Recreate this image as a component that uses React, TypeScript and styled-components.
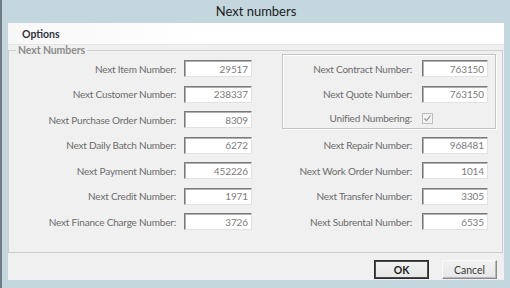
import React from "react";
import styled, { createGlobalStyle } from "styled-components";

const Global = createGlobalStyle`
  html, body { margin: 0; padding: 0; background: #ffffff; }
  body { font-family: Lato, "Noto Sans", sans-serif; }
`;

const Frame = styled.div`
  width: 510px;
  height: 288px;
  box-sizing: border-box;
  display: flex;
  flex-direction: column;
  background: #c4d7de;
  border-left: 2px solid #6f7b80;
  padding: 0 6px 8px 6px;
`;

const TitleBar = styled.div`
  height: 23px;
  flex: none;
  display: flex;
  align-items: center;
  justify-content: center;
  font-family: Lato, "Noto Sans", sans-serif;
  font-size: 13px;
  color: #1c1c1c;
  padding-bottom: 1px;
  box-sizing: border-box;
`;

const Client = styled.div`
  flex: 1;
  display: flex;
  flex-direction: column;
  background: #f0f0f0;
  min-height: 0;
`;

const MenuBar = styled.div`
  height: 22px;
  flex: none;
  display: flex;
  align-items: center;
  padding-left: 14px;
  background: linear-gradient(to right, #f7f7f7, #ffffff 40%, #ffffff);
  border-bottom: 1px solid #e6e6e6;
  box-sizing: border-box;
`;

const MenuItem = styled.span`
  font-size: 10.5px;
  font-weight: 700;
  color: #2e3440;
`;

const Group = styled.fieldset`
  flex: 1;
  margin: 0 1px 0 0;
  padding: 0;
  border: 1px solid #cdcdcd;
  border-top-color: #d0d0d0;
  min-width: 0;
  display: flex;
  flex-direction: row;
  gap: 30px;
`;

const Legend = styled.legend`
  margin-left: 7px;
  padding: 0 2px;
  font-size: 10.5px;
  line-height: 10px;
  font-weight: 700;
  color: #8d8d8d;
  letter-spacing: -0.1px;
`;

const Column = styled.div<{ $width: number }>`
  width: ${(p) => p.$width}px;
  flex: none;
  display: flex;
  flex-direction: column;
`;

const Stack = styled.div<{ $top?: number; $right?: number }>`
  display: flex;
  flex-direction: column;
  gap: 8.5px;
  padding-top: ${(p) => p.$top ?? 0}px;
  padding-right: ${(p) => p.$right ?? 0}px;
`;

const InnerBox = styled.div`
  margin-top: -1px;
  border: 1px solid #c4c4c4;
  box-shadow: inset 1px 1px 0 #ffffff, 1px 1px 0 #ffffff;
  padding: 5px 7px 3px 0;
  display: flex;
  flex-direction: column;
  gap: 8.5px;
  margin-bottom: 7.5px;
`;

const Row = styled.div<{ $gap: number; $h?: number }>`
  height: ${(p) => p.$h ?? 17}px;
  display: flex;
  align-items: center;
  justify-content: flex-end;
  gap: ${(p) => p.$gap}px;
`;

const Label = styled.span`
  font-size: 10px;
  letter-spacing: -0.2px;
  color: #6b6b6b;
  white-space: nowrap;
`;

const Field = styled.input<{ $w: number }>`
  width: ${(p) => p.$w}px;
  height: 17px;
  box-sizing: border-box;
  margin: 0;
  padding: 0 3px 0 2px;
  border: 1px solid;
  border-color: #7a7a7a #e2e2e2 #e2e2e2 #7a7a7a;
  box-shadow: inset 1px 1px 0 #b0b0b0;
  background: #ffffff;
  font-family: Lato, "Noto Sans", sans-serif;
  font-size: 10px;
  letter-spacing: -0.1px;
  color: #7c7c7c;
  text-align: right;
  outline: none;
`;

const Check = styled.span`
  width: 11px;
  height: 11px;
  box-sizing: border-box;
  border: 1px solid #bdbdbd;
  background: #f3f3f3;
  display: flex;
  align-items: center;
  justify-content: center;
  margin-right: 55px;
`;

const ButtonBar = styled.div`
  height: 27px;
  flex: none;
  display: flex;
  justify-content: flex-end;
  gap: 13px;
  padding: 7px 7px 0 0;
  box-sizing: border-box;
`;

const Button = styled.button<{ $default?: boolean }>`
  width: 55px;
  height: 19px;
  box-sizing: border-box;
  margin: 0;
  padding: 0;
  font-family: Lato, "Noto Sans", sans-serif;
  font-size: 10.5px;
  font-weight: ${(p) => (p.$default ? 700 : 400)};
  color: ${(p) => (p.$default ? "#1a1a1a" : "#3a3a3a")};
  background: linear-gradient(#f2f2f2, #e6e6e6);
  border: 1px solid;
  border-color: ${(p) =>
    p.$default ? "#2c2c2c" : "#f8f8f8 #8a8a8a #8a8a8a #f8f8f8"};
  box-shadow: ${(p) =>
    p.$default
      ? "inset 1px 1px 0 #4a4a4a, inset -1px -1px 0 #4a4a4a"
      : "inset -1px -1px 0 #b8b8b8"};
`;

type Entry = { label: string; value: string };

const left: Entry[] = [
  { label: "Next Item Number:", value: "29517" },
  { label: "Next Customer Number:", value: "238337" },
  { label: "Next Purchase Order Number:", value: "8309" },
  { label: "Next Daily Batch Number:", value: "6272" },
  { label: "Next Payment Number:", value: "452226" },
  { label: "Next Credit Number:", value: "1971" },
  { label: "Next Finance Charge Number:", value: "3726" },
];

const boxed: Entry[] = [
  { label: "Next Contract Number:", value: "763150" },
  { label: "Next Quote Number:", value: "763150" },
];

const right: Entry[] = [
  { label: "Next Repair Number:", value: "968481" },
  { label: "Next Work Order Number:", value: "1014" },
  { label: "Next Transfer Number:", value: "3305" },
  { label: "Next Subrental Number:", value: "6535" },
];

const NumberRow = ({ e, gap, w }: { e: Entry; gap: number; w: number }) => (
  <Row $gap={gap}>
    <Label>{e.label}</Label>
    <Field $w={w} readOnly value={e.value} />
  </Row>
);

export default function App() {
  return (
    <>
      <Global />
      <Frame>
        <TitleBar>Next numbers</TitleBar>
        <Client>
          <MenuBar>
            <MenuItem>Options</MenuItem>
          </MenuBar>
          <Group>
            <Legend>Next Numbers</Legend>
            <Column $width={243}>
              <Stack $top={5}>
                {left.map((e) => (
                  <NumberRow key={e.label} e={e} gap={8} w={68} />
                ))}
              </Stack>
            </Column>
            <Column $width={214}>
              <InnerBox>
                {boxed.map((e) => (
                  <NumberRow key={e.label} e={e} gap={10} w={66} />
                ))}
                <Row $gap={10} $h={14}>
                  <Label>Unified Numbering:</Label>
                  <Check>
                    <svg width="9" height="9" viewBox="0 0 9 9">
                      <path
                        d="M1.5 4.5 L3.5 6.5 L7.5 1.5"
                        fill="none"
                        stroke="#9a9a9a"
                        strokeWidth="1.2"
                      />
                    </svg>
                  </Check>
                </Row>
              </InnerBox>
              <Stack $right={8}>
                {right.map((e) => (
                  <NumberRow key={e.label} e={e} gap={10} w={66} />
                ))}
              </Stack>
            </Column>
          </Group>
          <ButtonBar>
            <Button $default>OK</Button>
            <Button>Cancel</Button>
          </ButtonBar>
        </Client>
      </Frame>
    </>
  );
}
